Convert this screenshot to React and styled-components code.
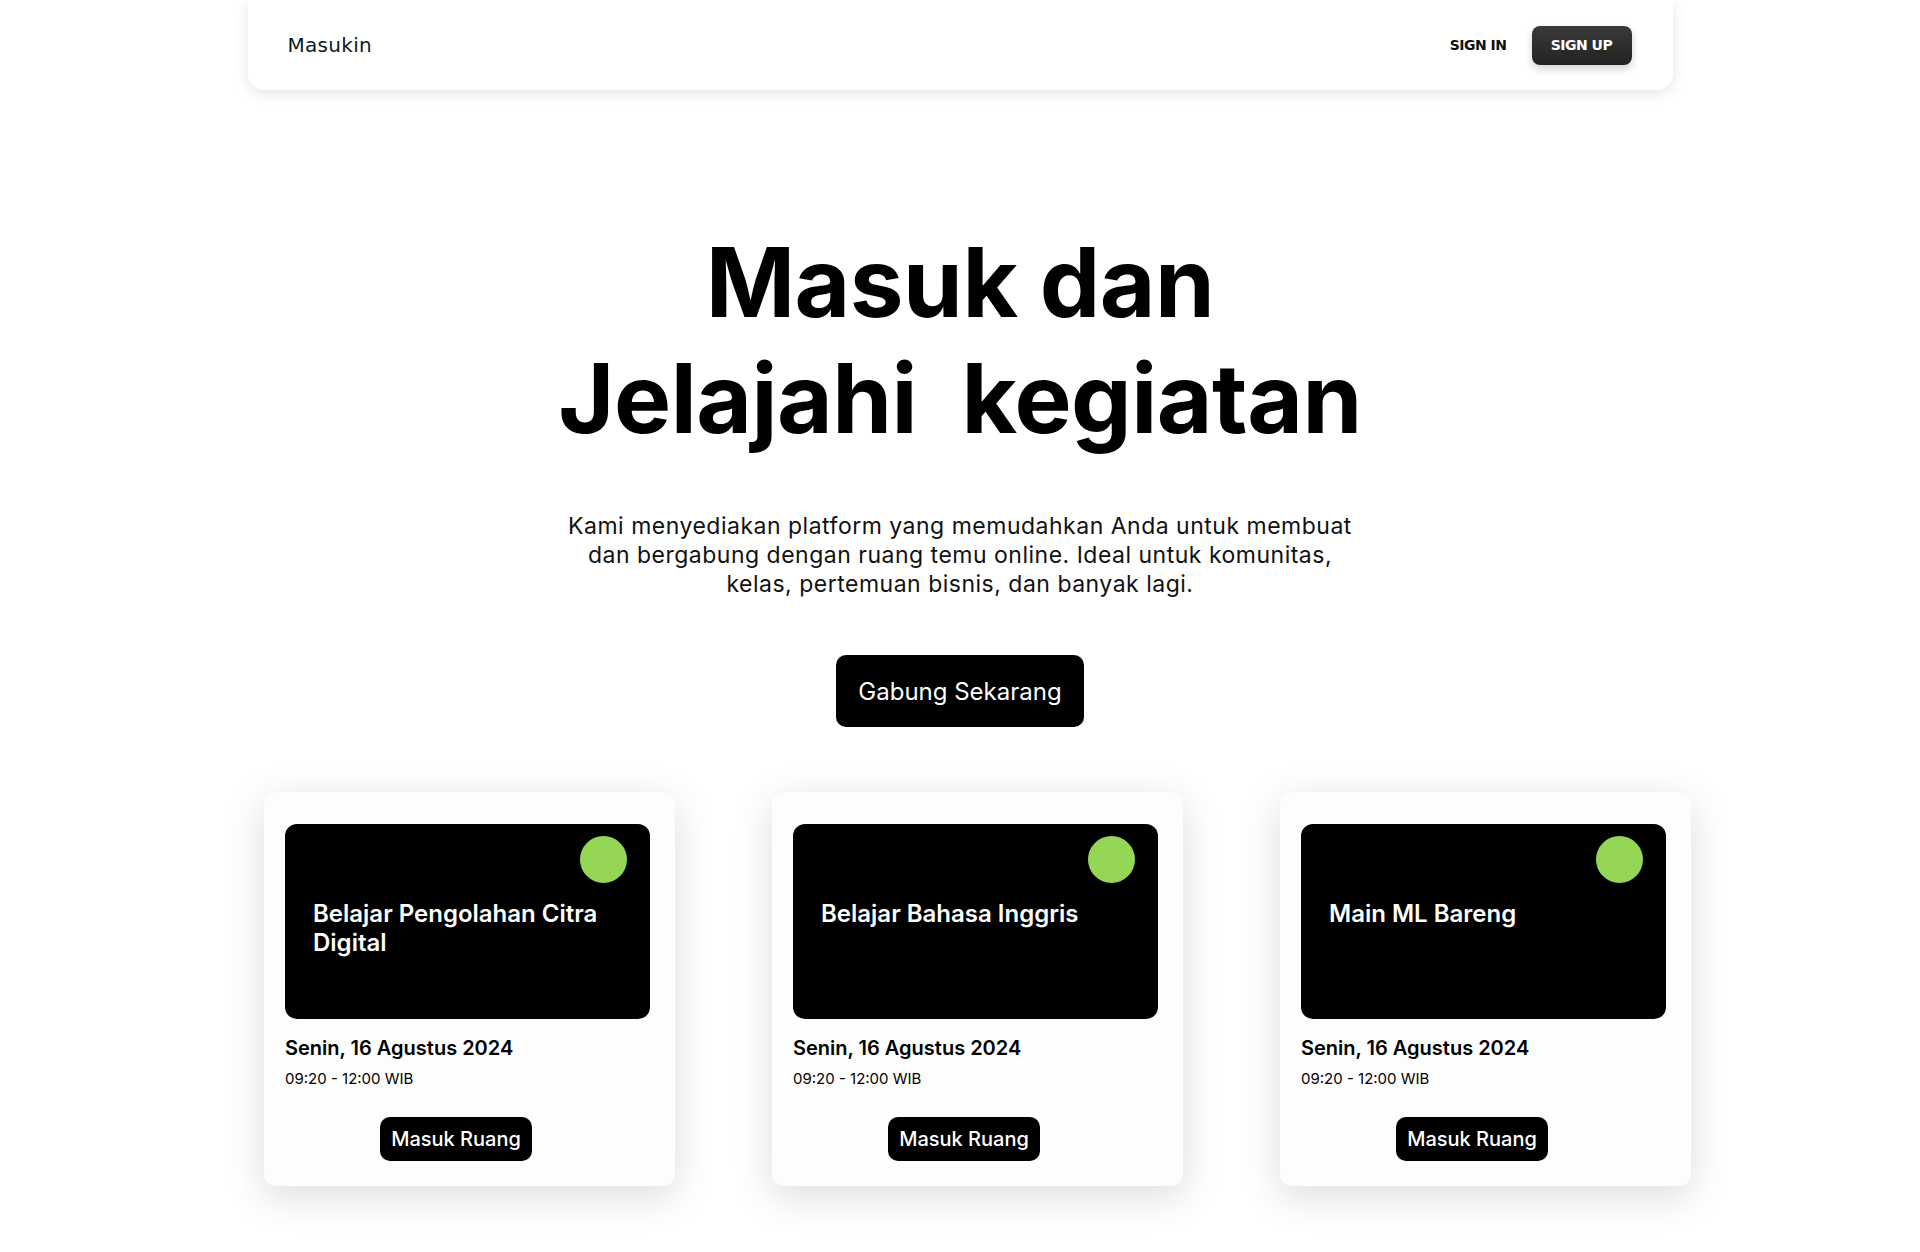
import React from "react";
import styled, { createGlobalStyle } from "styled-components";

const GlobalStyle = createGlobalStyle`
  * {
    box-sizing: border-box;
  }
  body {
    margin: 0;
    background: #ffffff;
    font-family: "Inter", "Liberation Sans", sans-serif;
    color: #000000;
  }
`;

const events = [
  { id: 1, title: "Belajar Pengolahan Citra Digital" },
  { id: 2, title: "Belajar Bahasa Inggris" },
  { id: 3, title: "Main ML Bareng" },
];

const App = () => {
  return (
    <Page>
      <GlobalStyle />
      <Nav>
        <Brand>Masukin</Brand>
        <NavActions>
          <SignIn href="#">SIGN IN</SignIn>
          <SignUp>SIGN UP</SignUp>
        </NavActions>
      </Nav>

      <Hero>
        <Title>
          Masuk dan
          <br />
          Jelajahi{"\u00a0"} kegiatan
        </Title>
        <Lead>
          Kami menyediakan platform yang memudahkan Anda untuk membuat dan
          bergabung dengan ruang temu online. Ideal untuk komunitas, kelas,
          pertemuan bisnis, dan banyak lagi.
        </Lead>
        <JoinButton>Gabung Sekarang</JoinButton>
      </Hero>

      <CardRow>
        {events.map((ev) => (
          <Card key={ev.id}>
            <Cover>
              <LiveDot />
              <CoverTitle>{ev.title}</CoverTitle>
            </Cover>
            <DateText>Senin, 16 Agustus 2024</DateText>
            <TimeText>09:20 - 12:00 WIB</TimeText>
            <CardFooter>
              <EnterButton>Masuk Ruang</EnterButton>
            </CardFooter>
          </Card>
        ))}
      </CardRow>
    </Page>
  );
};

const Page = styled.div`
  min-height: 1252px;
  display: flex;
  flex-direction: column;
  align-items: center;
`;

const Nav = styled.nav`
  width: 1425px;
  height: 90px;
  padding: 0 41px 0 40px;
  display: flex;
  align-items: center;
  justify-content: space-between;
  background: #ffffff;
  border-radius: 0 0 16px 16px;
  box-shadow: 0 4px 14px rgba(0, 0, 0, 0.1);
`;

const Brand = styled.div`
  font-family: "DejaVu Sans", sans-serif;
  font-size: 20px;
  letter-spacing: 0.3px;
  color: #0f1a22;
`;

const NavActions = styled.div`
  display: flex;
  align-items: center;
  gap: 25px;
`;

const SignIn = styled.a`
  font-family: "DejaVu Sans", sans-serif;
  font-weight: 700;
  font-size: 14px;
  letter-spacing: -0.5px;
  color: #111111;
  text-decoration: none;
`;

const SignUp = styled.button`
  width: 100px;
  height: 39px;
  border: none;
  border-radius: 8px;
  background: linear-gradient(180deg, #3a3a3a 0%, #222222 100%);
  box-shadow: 0 4px 8px rgba(0, 0, 0, 0.18);
  color: #ffffff;
  font-family: "DejaVu Sans", sans-serif;
  font-weight: 700;
  font-size: 14px;
  letter-spacing: -0.5px;
  cursor: pointer;
`;

const Hero = styled.section`
  display: flex;
  flex-direction: column;
  align-items: center;
  padding-top: 134px;
  text-align: center;
`;

const Title = styled.h1`
  margin: 0;
  font-size: 96px;
  font-weight: 700;
  line-height: 116px;
  letter-spacing: -0.5px;
`;

const Lead = styled.p`
  margin: 56px 0 0;
  max-width: 795px;
  font-size: 23px;
  line-height: 29px;
  letter-spacing: 0.5px;
  font-weight: 400;
  color: #111111;
`;

const JoinButton = styled.button`
  margin-top: 56px;
  width: 248px;
  height: 72px;
  border: none;
  border-radius: 10px;
  background: #000000;
  color: #ffffff;
  font-family: "Inter", sans-serif;
  font-size: 24px;
  font-weight: 400;
  cursor: pointer;
`;

const CardRow = styled.div`
  display: flex;
  justify-content: center;
  gap: 97px;
  margin-top: 65px;
  padding-left: 35px;
`;

const Card = styled.div`
  width: 411px;
  height: 394px;
  padding: 32px 25px 25px 21px;
  display: flex;
  flex-direction: column;
  background: #fdfdfd;
  border-radius: 12px;
  box-shadow: 0 10px 40px rgba(0, 0, 0, 0.14);
`;

const Cover = styled.div`
  width: 365px;
  height: 196px;
  padding: 12px 23px 0 28px;
  display: flex;
  flex-direction: column;
  background: #000000;
  border-radius: 12px;
`;

const LiveDot = styled.span`
  align-self: flex-end;
  width: 47px;
  height: 47px;
  border-radius: 50%;
  background: #96d656;
`;

const CoverTitle = styled.h3`
  margin: 16px 0 0;
  color: #ffffff;
  font-size: 24px;
  font-weight: 600;
  line-height: 29px;
`;

const DateText = styled.div`
  margin-top: 17px;
  font-size: 20px;
  font-weight: 600;
  line-height: 24px;
`;

const TimeText = styled.div`
  margin-top: 10px;
  font-size: 15px;
  font-weight: 400;
  line-height: 17px;
`;

const CardFooter = styled.div`
  display: flex;
  justify-content: center;
  margin-top: 30px;
  padding-right: 23px;
`;

const EnterButton = styled.button`
  height: 44px;
  padding: 0 11px;
  border: none;
  border-radius: 10px;
  background: #000000;
  color: #ffffff;
  font-family: "Inter", sans-serif;
  font-size: 20px;
  font-weight: 500;
  cursor: pointer;
`;

export default App;
